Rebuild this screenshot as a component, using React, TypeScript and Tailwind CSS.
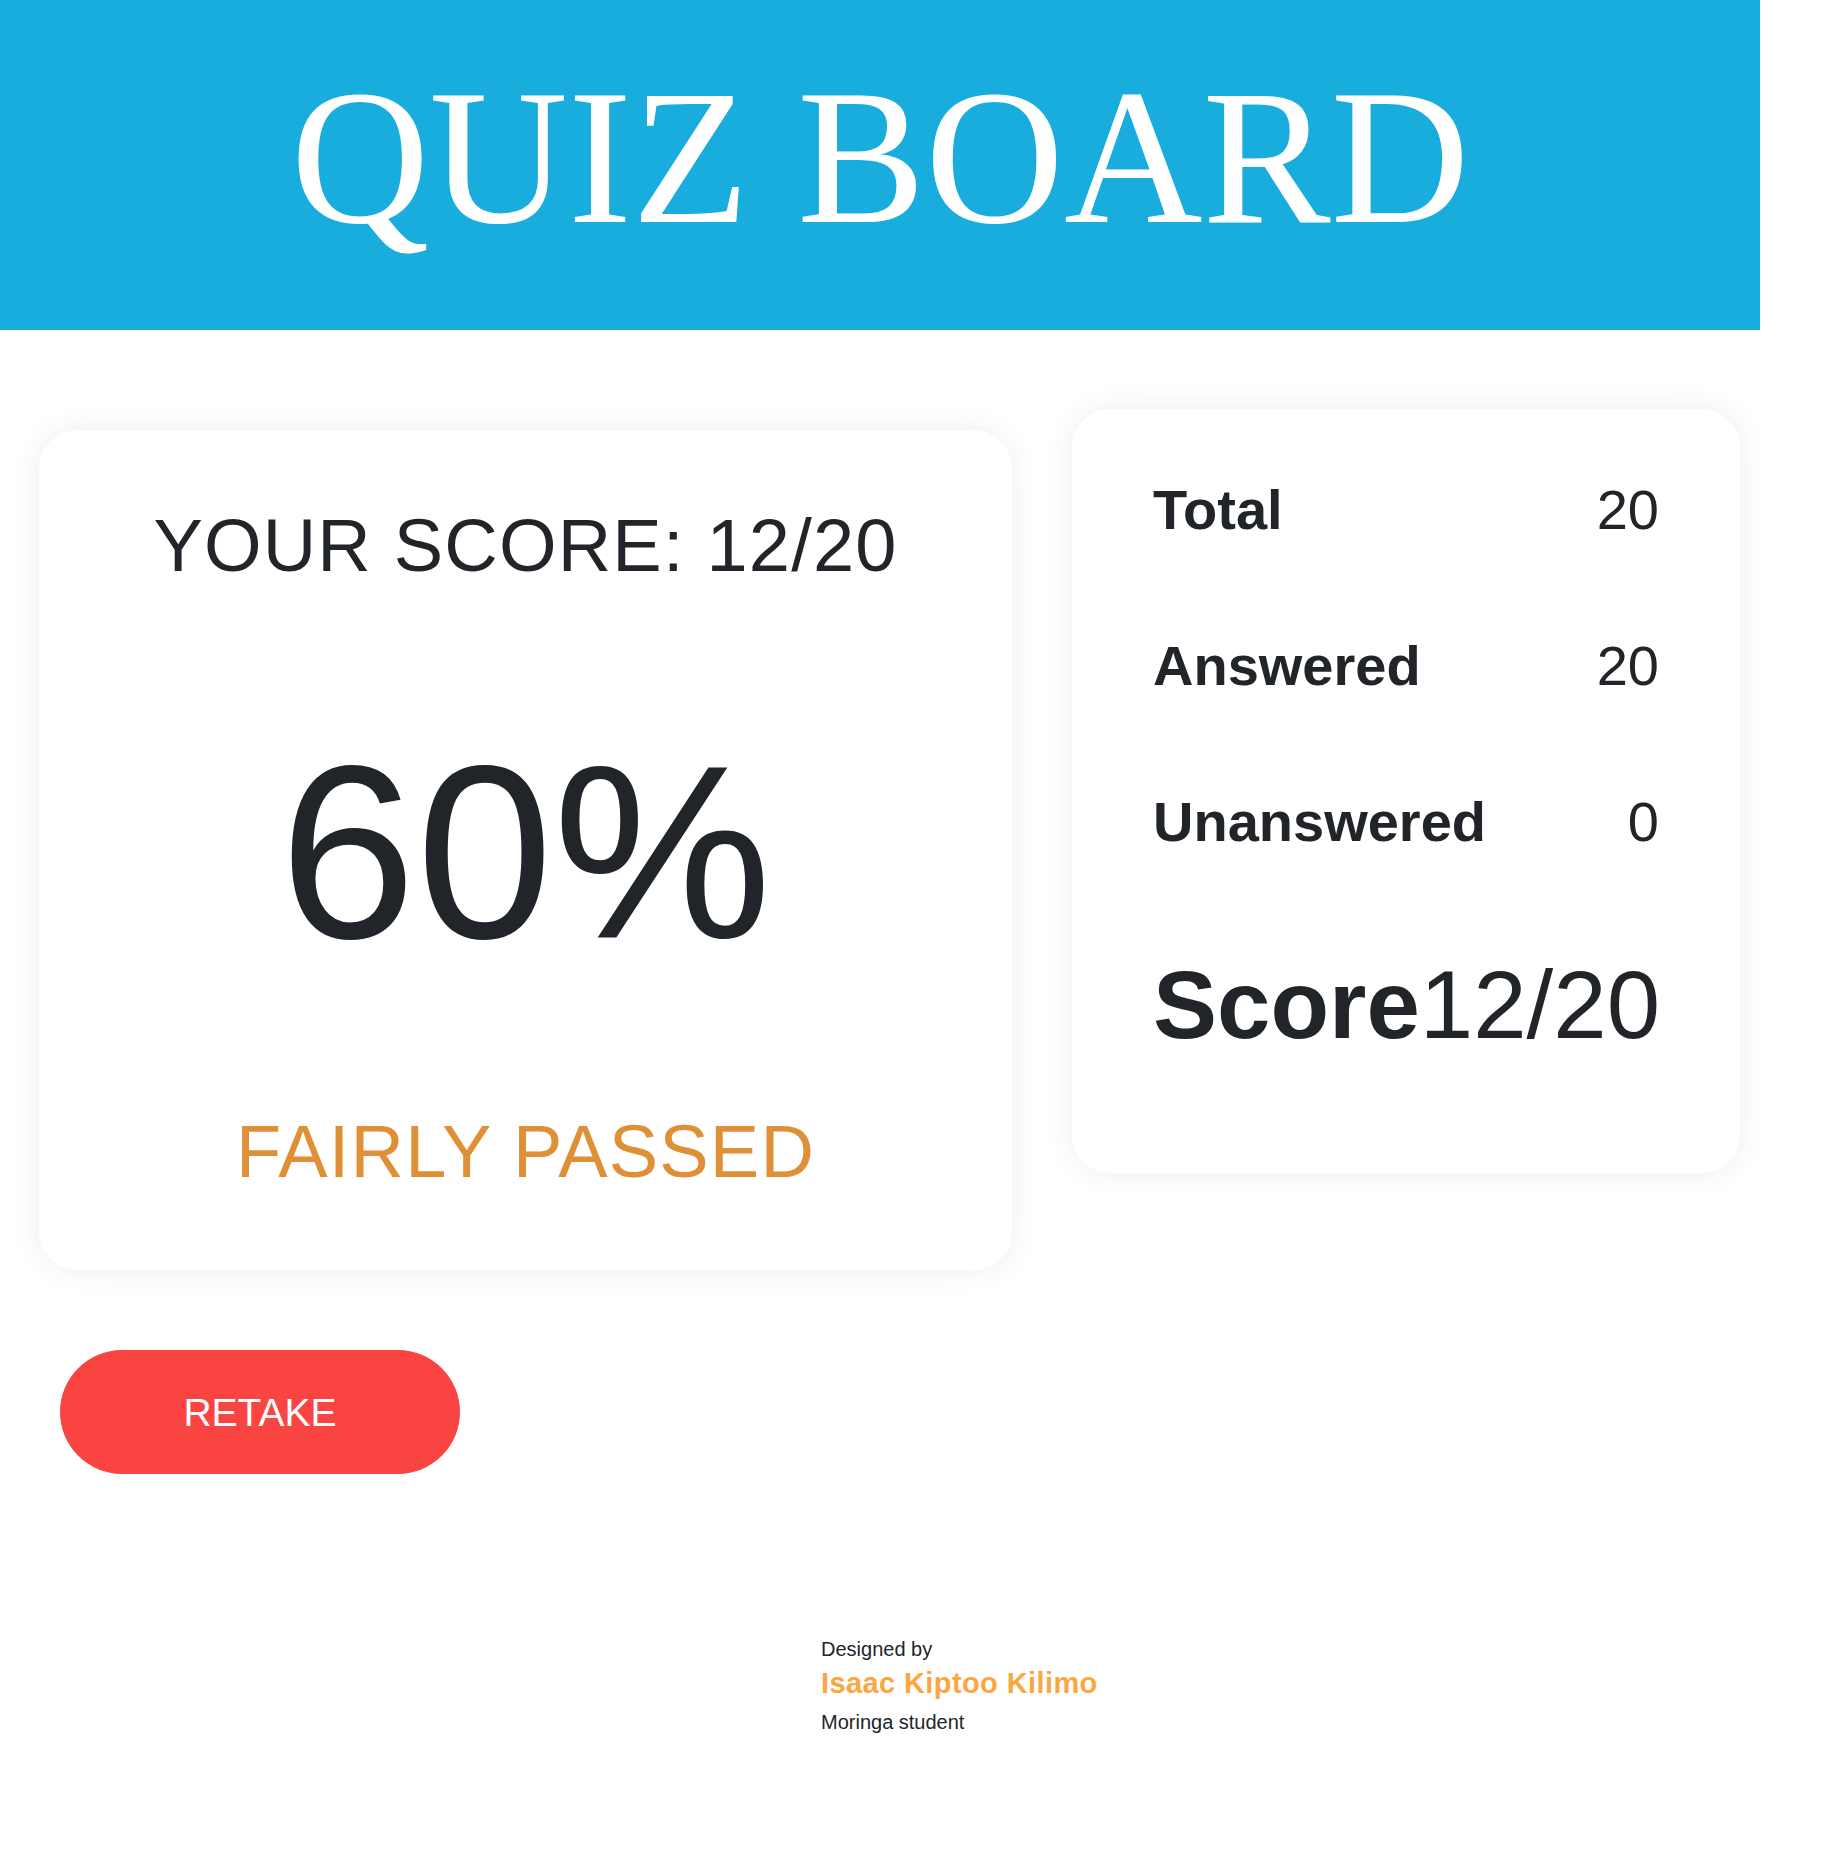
export default function App() {
  const rows = [
    { label: "Total", value: "20" },
    { label: "Answered", value: "20" },
    { label: "Unanswered", value: "0" },
  ];

  return (
    <div className="min-h-[1870px] bg-white font-['Liberation_Sans',Arial,sans-serif] text-[#212529]">
      <header className="w-[1760px] h-[330px] bg-[#18addd] flex justify-center pt-[62px]">
        <h1 className="font-['Liberation_Serif','Times_New_Roman',serif] text-white text-[192px] leading-none font-normal">
          QUIZ BOARD
        </h1>
      </header>

      <div className="flex items-start pl-[39px] gap-[60px]">
        <div className="mt-[100px] w-[973px] rounded-[38px] bg-white shadow-[0_0_30px_rgba(0,0,0,0.07)] pt-[79px] pb-[81px] flex flex-col items-center">
          <p className="text-[74px] leading-none tracking-[1.2px]">YOUR SCORE: 12/20</p>
          <p className="mt-[147px] text-[246px] leading-none">60%</p>
          <p className="mt-[139px] text-[74px] leading-none tracking-[1.2px] text-[#df8f35]">FAIRLY PASSED</p>
        </div>

        <div className="mt-[79px] w-[668px] rounded-[38px] bg-white shadow-[0_0_30px_rgba(0,0,0,0.07)] pt-[73px] pb-[120px] px-[81px]">
          {rows.map((r, i) => (
            <div
              key={r.label}
              className={`flex justify-between text-[56px] leading-none ${i > 0 ? "mt-[100px]" : ""}`}
            >
              <span className="font-bold">{r.label}</span>
              <span>{r.value}</span>
            </div>
          ))}
          <div className="mt-[107px] flex justify-between text-[96px] leading-none">
            <span>
              <span className="font-bold">Score</span>12/20
            </span>
          </div>
        </div>
      </div>

      <div className="pl-[60px] mt-[80px]">
        <button className="w-[400px] h-[124px] rounded-full bg-[#f94442] text-white text-[39px] leading-none">
          RETAKE
        </button>
      </div>

      <footer className="pl-[821px] mt-[165px] pb-[100px]">
        <p className="text-[20px] leading-none">Designed by</p>
        <p className="mt-[10px] text-[29px] leading-none font-bold tracking-[0.4px] text-[#fba63f]">
          Isaac Kiptoo Kilimo
        </p>
        <p className="mt-[14px] text-[20px] leading-none">Moringa student</p>
      </footer>
    </div>
  );
}
